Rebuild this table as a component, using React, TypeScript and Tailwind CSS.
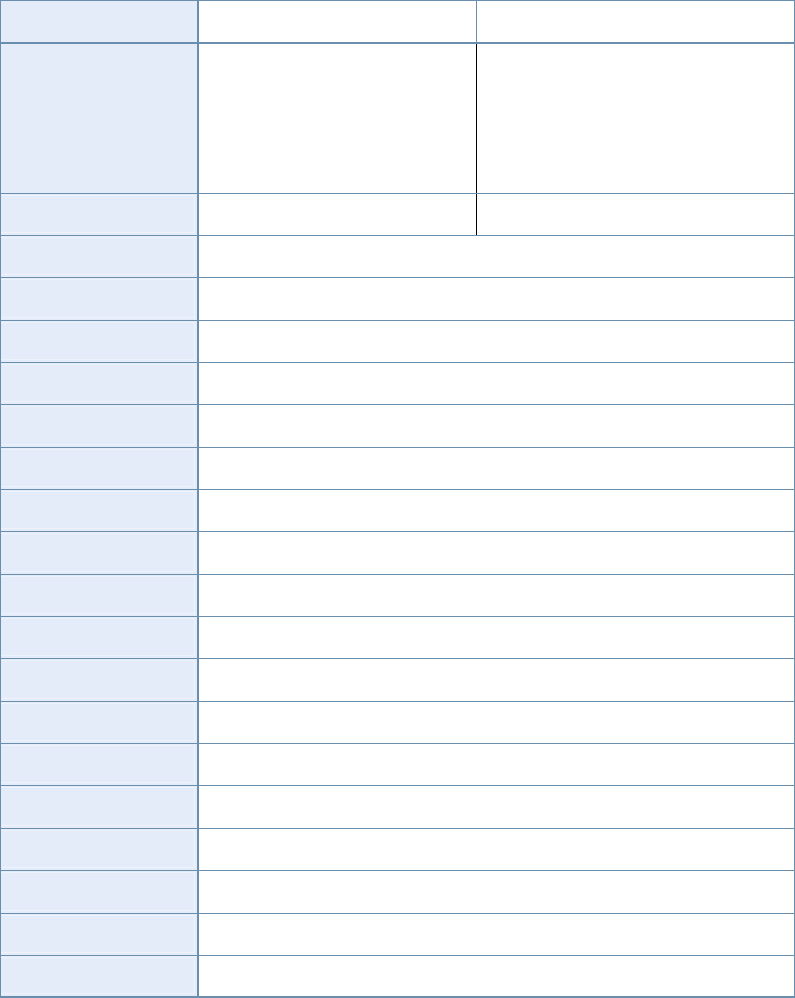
import React from "react";

const B = "border-[#6a8fae]";

function Label({ inset }: { inset?: boolean }) {
  return (
    <div className={`w-[198px] shrink-0 bg-[#e4ecf9] border-r-2 ${B} h-full`}>
      {inset ? (
        <div className="h-full w-full pr-[2px] pb-[2px] pt-[1px]">
          <div className="h-full w-full border-r border-t border-b border-[#eef3fb]" />
        </div>
      ) : null}
    </div>
  );
}

export default function App() {
  const rest = Array.from({ length: 17 });
  return (
    <div className="w-[795px] h-[998px] bg-white" style={{ fontFamily: '"Liberation Sans", Arial, sans-serif' }}>
      <div className={`w-[795px] h-[998px] border-l border-t border-r border-b-2 ${B} flex flex-col box-border`}>
        {/* Row 1 */}
        <div className={`flex h-[43px] shrink-0 border-b-2 ${B}`}>
          <Label />
          <div className={`w-[278px] shrink-0 border-r ${B}`} />
          <div className="flex-1" />
        </div>
        {/* Row 2 */}
        <div className={`flex h-[150px] shrink-0 border-b ${B}`}>
          <Label />
          <div className="w-[278px] shrink-0 border-r border-black" />
          <div className="flex-1" />
        </div>
        {/* Row 3 */}
        <div className={`flex h-[42px] shrink-0 border-b ${B}`}>
          <Label inset />
          <div className="w-[278px] shrink-0 border-r border-black" />
          <div className="flex-1" />
        </div>
        {rest.map((_, i) => (
          <div key={i} className={`flex h-[42.35px] shrink-0 border-b ${B}`}>
            <Label inset />
            <div className="flex-1" />
          </div>
        ))}
        <div className="flex flex-1">
          <Label inset />
          <div className="flex-1" />
        </div>
      </div>
    </div>
  );
}
